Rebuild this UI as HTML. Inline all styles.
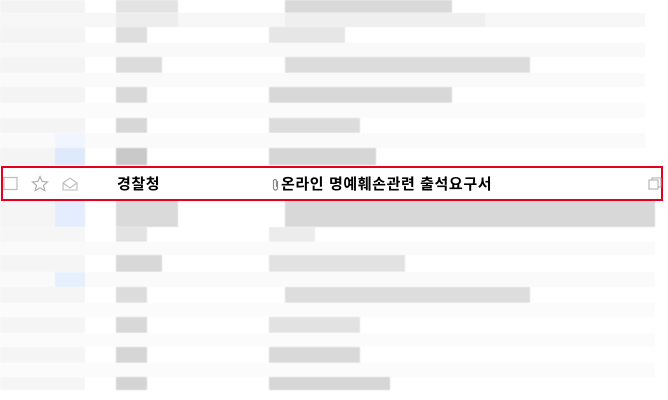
<!DOCTYPE html>
<html><head><meta charset="utf-8"><style>
body{margin:0;width:668px;height:400px;background:#fff;position:relative;overflow:hidden;font-family:"Liberation Sans","Noto Sans CJK KR",sans-serif}
.b{position:absolute;filter:blur(0.6px)}
.box{position:absolute;left:1px;top:166px;width:658px;height:31px;border:2px solid #e60020;background:#fff}
.t{position:absolute;top:5px;font-size:15px;color:#000;font-weight:bold;letter-spacing:0.6px;white-space:nowrap}
</style></head><body>
<div class="b" style="left:0;top:0;width:85px;height:13px;background:#f3f3f3"></div>
<div class="b" style="left:116px;top:0;width:62px;height:13px;background:#e3e3e3"></div>
<div class="b" style="left:285px;top:0;width:167px;height:13px;background:#d9d9d9"></div>
<div class="b" style="left:0;top:13px;width:645px;height:14px;background:#f7f7f7"></div>
<div class="b" style="left:116px;top:13px;width:62px;height:14px;background:#ededed"></div>
<div class="b" style="left:285px;top:13px;width:200px;height:14px;background:#efefef"></div>
<div class="b" style="left:0;top:27px;width:85px;height:16px;background:#f4f4f4"></div>
<div class="b" style="left:116px;top:27px;width:31px;height:16px;background:#dedede"></div>
<div class="b" style="left:269px;top:27px;width:76px;height:16px;background:#e6e6e6"></div>
<div class="b" style="left:0;top:43px;width:645px;height:14px;background:#f9f9f9"></div>
<div class="b" style="left:0;top:57px;width:85px;height:16px;background:#f4f4f4"></div>
<div class="b" style="left:116px;top:57px;width:46px;height:16px;background:#dcdcdc"></div>
<div class="b" style="left:285px;top:57px;width:245px;height:16px;background:#dcdcdc"></div>
<div class="b" style="left:0;top:73px;width:645px;height:14px;background:#fafafa"></div>
<div class="b" style="left:0;top:87px;width:85px;height:16px;background:#f4f4f4"></div>
<div class="b" style="left:116px;top:87px;width:31px;height:16px;background:#d9d9d9"></div>
<div class="b" style="left:269px;top:87px;width:183px;height:16px;background:#d8d8d8"></div>
<div class="b" style="left:0;top:103px;width:645px;height:15px;background:#fbfbfb"></div>
<div class="b" style="left:0;top:118px;width:85px;height:15px;background:#f4f4f4"></div>
<div class="b" style="left:116px;top:118px;width:31px;height:15px;background:#d7d7d7"></div>
<div class="b" style="left:269px;top:118px;width:91px;height:15px;background:#dcdcdc"></div>
<div class="b" style="left:0;top:133px;width:645px;height:15px;background:#fafafa"></div>
<div class="b" style="left:55px;top:133px;width:30px;height:15px;background:#f0f5ff"></div>
<div class="b" style="left:0;top:148px;width:85px;height:17px;background:#f4f4f4"></div>
<div class="b" style="left:55px;top:148px;width:30px;height:17px;background:#dfe9fc"></div>
<div class="b" style="left:116px;top:148px;width:31px;height:17px;background:#c9c9c9"></div>
<div class="b" style="left:269px;top:148px;width:107px;height:17px;background:#d6d6d6"></div>

<div class="b" style="left:0;top:200px;width:85px;height:27px;background:#f5f5f5"></div>
<div class="b" style="left:55px;top:200px;width:30px;height:27px;background:#e3edfd"></div>
<div class="b" style="left:116px;top:200px;width:62px;height:27px;background:#dadada"></div>
<div class="b" style="left:285px;top:200px;width:370px;height:27px;background:#d8d8d8"></div>
<div class="b" style="left:0;top:227px;width:85px;height:15px;background:#f6f6f6"></div>
<div class="b" style="left:116px;top:227px;width:31px;height:15px;background:#e3e3e3"></div>
<div class="b" style="left:269px;top:227px;width:46px;height:15px;background:#ececec"></div>
<div class="b" style="left:0;top:242px;width:655px;height:13px;background:#fafafa"></div>
<div class="b" style="left:0;top:255px;width:85px;height:17px;background:#f5f5f5"></div>
<div class="b" style="left:116px;top:255px;width:46px;height:17px;background:#d8d8d8"></div>
<div class="b" style="left:269px;top:255px;width:136px;height:17px;background:#e2e2e2"></div>
<div class="b" style="left:0;top:272px;width:655px;height:15px;background:#fafafa"></div>
<div class="b" style="left:55px;top:272px;width:30px;height:15px;background:#e6effd"></div>
<div class="b" style="left:0;top:287px;width:85px;height:16px;background:#f5f5f5"></div>
<div class="b" style="left:116px;top:287px;width:31px;height:16px;background:#dcdcdc"></div>
<div class="b" style="left:285px;top:287px;width:245px;height:16px;background:#dddddd"></div>
<div class="b" style="left:0;top:303px;width:655px;height:14px;background:#fbfbfb"></div>
<div class="b" style="left:0;top:317px;width:85px;height:16px;background:#f5f5f5"></div>
<div class="b" style="left:116px;top:317px;width:31px;height:16px;background:#d8d8d8"></div>
<div class="b" style="left:269px;top:317px;width:91px;height:16px;background:#e2e2e2"></div>
<div class="b" style="left:0;top:333px;width:655px;height:14px;background:#fbfbfb"></div>
<div class="b" style="left:0;top:347px;width:85px;height:16px;background:#f5f5f5"></div>
<div class="b" style="left:116px;top:347px;width:31px;height:16px;background:#d6d6d6"></div>
<div class="b" style="left:269px;top:347px;width:91px;height:16px;background:#d9d9d9"></div>
<div class="b" style="left:0;top:363px;width:655px;height:14px;background:#fbfbfb"></div>
<div class="b" style="left:0;top:377px;width:85px;height:13px;background:#f5f5f5"></div>
<div class="b" style="left:116px;top:377px;width:31px;height:13px;background:#d4d4d4"></div>
<div class="b" style="left:269px;top:377px;width:121px;height:13px;background:#d6d6d6"></div>

<div class="box">
 <svg style="position:absolute;left:0;top:8px" width="16" height="16" viewBox="0 0 16 16"><rect x="1" y="1.5" width="13" height="12" fill="none" stroke="#bbb" stroke-width="1.2"/></svg>
 <svg style="position:absolute;left:28px;top:7px" width="18" height="18" viewBox="0 0 18 18"><path d="M9 1.5l2.2 5 5.3.4-4 3.5 1.3 5.2L9 12.8l-4.8 2.8 1.3-5.2-4-3.5 5.3-.4z" fill="none" stroke="#aaa" stroke-width="1.1"/></svg>
 <svg style="position:absolute;left:58px;top:7px" width="18" height="18" viewBox="0 0 18 18"><path d="M2 8L9 3l7 5v7H2z M2 8l7 5 7-5" fill="none" stroke="#bbb" stroke-width="1.1"/></svg>
 <div class="t" style="left:114px">경찰청</div>
 <svg style="position:absolute;left:269px;top:10px" width="8" height="14" viewBox="0 0 8 14"><path d="M5.5 3v7a2 2 0 0 1-4 0V3a1.5 1.5 0 0 1 3 0v6" fill="none" stroke="#888" stroke-width="1.2"/></svg>
 <div class="t" style="left:278px">온라인 명예훼손관련 출석요구서</div>
 <svg style="position:absolute;left:645px;top:9px" width="14" height="14" viewBox="0 0 14 14"><rect x="1" y="3" width="9" height="9" fill="none" stroke="#aaa"/><path d="M4 3V1h9v9h-3" fill="none" stroke="#aaa"/></svg>
</div>
</body></html>
